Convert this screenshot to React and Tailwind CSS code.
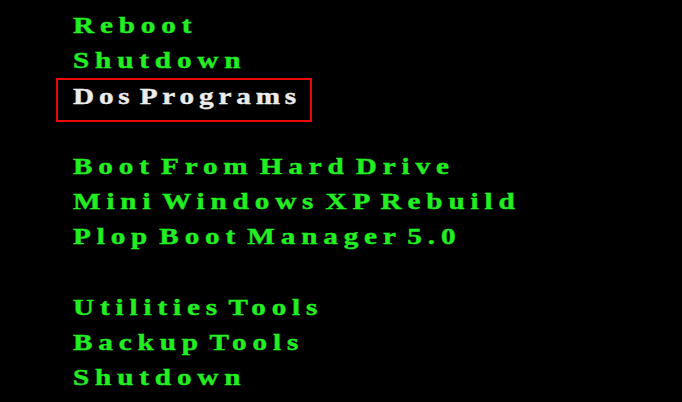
import React from 'react'

const groups = [
  ['Reboot', 'Shutdown', 'Dos Programs'],
  ['Boot From Hard Drive', 'Mini Windows XP Rebuild', 'Plop Boot Manager 5.0'],
  ['Utilities Tools', 'Backup Tools', 'Shutdown'],
]

function Label({ text, white }) {
  return (
    <span
      className={`inline-block origin-left scale-x-[1.27] whitespace-pre font-bold [-webkit-text-stroke:0.4px_currentColor] [word-spacing:-5.5px] ${
        white ? 'tracking-[3.8px] text-[#ececec]' : 'tracking-[4.6px] text-[#22ee22]'
      }`}
    >
      {text}
    </span>
  )
}

export default function App() {
  return (
    <div className="h-[402px] w-[682px] overflow-hidden bg-black pl-[73px] pt-[8px] font-['Liberation_Serif',serif] text-[23px] leading-[35.2px]">
      {groups.map((items, g) => (
        <div key={g} className={g > 0 ? 'mt-[35.2px]' : ''}>
          {items.map((item) =>
            item === 'Dos Programs' ? (
              <div
                key={item}
                className="-mb-[8.8px] -ml-[17px] h-[44px] w-[256px] border-2 border-[#e80808] pl-[15px] leading-[34px]"
              >
                <Label text={item} white />
              </div>
            ) : (
              <div key={item} className="h-[35.2px]">
                <Label text={item} />
              </div>
            )
          )}
        </div>
      ))}
    </div>
  )
}
